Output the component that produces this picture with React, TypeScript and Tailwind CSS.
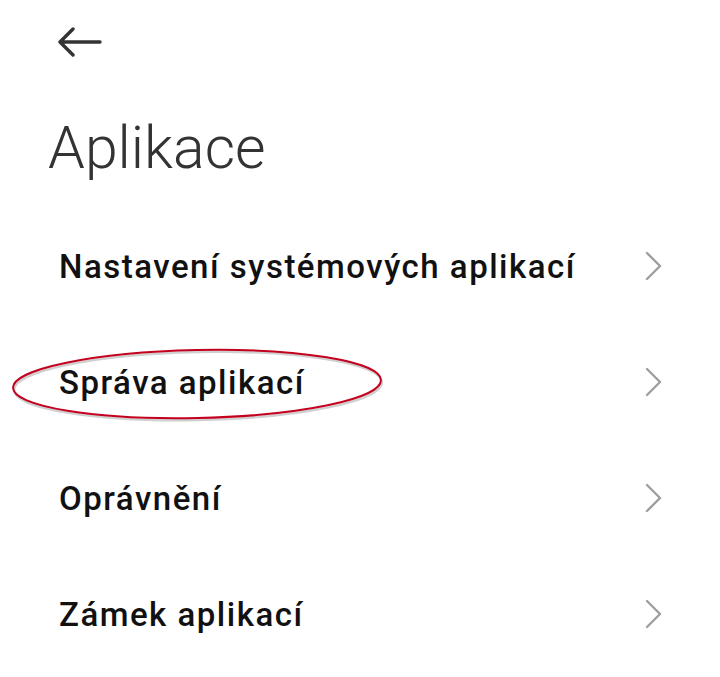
const items = [
  "Nastavení systémových aplikací",
  "Správa aplikací",
  "Oprávnění",
  "Zámek aplikací",
];

function BackArrow() {
  return (
    <svg width="44" height="30" viewBox="0 0 44 30" fill="none">
      <path
        d="M42 15H3M15 2L2 15l13 13"
        stroke="#333333"
        strokeWidth="3.4"
        strokeLinecap="round"
        strokeLinejoin="round"
      />
    </svg>
  );
}

function Chevron() {
  return (
    <svg width="18" height="30" viewBox="0 0 18 30" fill="none">
      <path
        d="M3 2l13 13L3 28"
        stroke="#9e9e9e"
        strokeWidth="2.4"
        strokeLinecap="round"
        strokeLinejoin="round"
      />
    </svg>
  );
}

function Highlight() {
  return (
    <svg
      className="absolute left-[6px] top-[18px] pointer-events-none"
      width="384"
      height="86"
      viewBox="0 0 384 86"
      fill="none"
    >
      <ellipse cx="192" cy="44" rx="184" ry="34" stroke="#d0d0d0" strokeWidth="2.5" transform="rotate(-1.2 192 44)" />
      <ellipse cx="191" cy="42" rx="184" ry="34" stroke="#c4001f" strokeWidth="2" transform="rotate(-1.2 191 42)" />
    </svg>
  );
}

export default function App() {
  return (
    <div
      className="w-[720px] h-[677px] bg-white overflow-hidden"
      style={{ fontFamily: "Roboto, 'Noto Sans', sans-serif" }}
    >
      <div className="h-[84px] flex items-center pl-[58px]">
        <BackArrow />
      </div>
      <h1 className="mt-[34px] pl-[48px] text-[59px] leading-[59px] font-light text-[#333333]">
        Aplikace
      </h1>
      <ul className="mt-[31px]">
        {items.map((name, i) => (
          <li
            key={name}
            className="relative h-[116px] flex items-center justify-between pl-[59px] pr-[58px]"
          >
            {i === 1 && <Highlight />}
            <span className="relative text-[33px] leading-none font-medium tracking-[1.5px] text-[#111111]">
              {name}
            </span>
            <Chevron />
          </li>
        ))}
      </ul>
    </div>
  );
}
